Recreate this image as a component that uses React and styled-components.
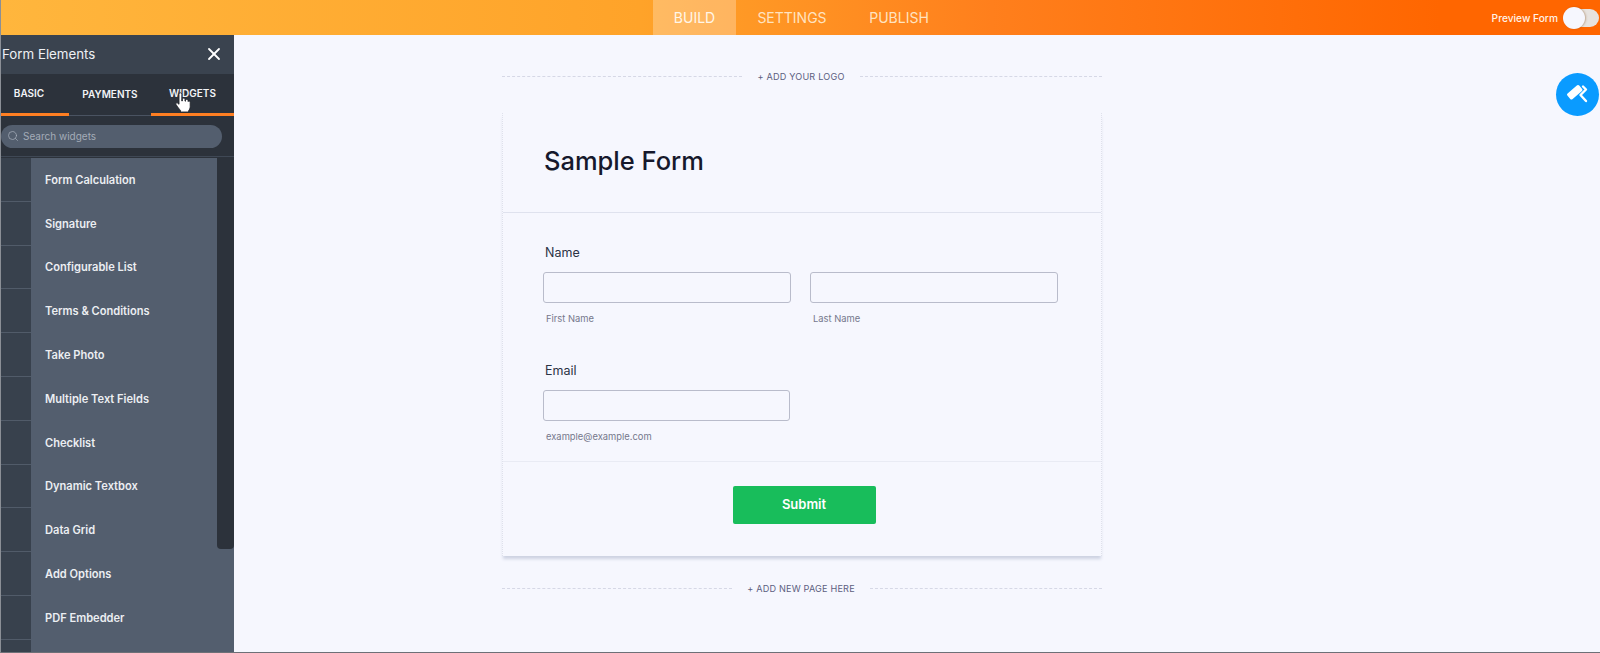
import React from 'react';
import styled, { createGlobalStyle } from 'styled-components';
import { Search, X } from 'lucide-react';

const GlobalStyle = createGlobalStyle`
  * { box-sizing: border-box; }
  html, body { margin: 0; padding: 0; height: 100%; overflow: hidden; }
  body { background: #f6f7fe; font-family: Inter, "Liberation Sans", sans-serif; }
`;

const Page = styled.div`
  position: relative;
  display: flex;
  flex-direction: column;
  width: 1600px;
  height: 653px;
  border-left: 1px solid #8b8f96;
  border-bottom: 1px solid #6d7077;
  overflow: hidden;
`;

const TopBar = styled.header`
  display: grid;
  grid-template-columns: 653px auto 1fr;
  align-items: stretch;
  flex: 0 0 35px;
  height: 35px;
  margin-left: -1px;
  background: linear-gradient(90deg, #ffb63d 0%, #ffa329 40%, #ff7f1c 62%, #ff6600 90%);
`;

const NavTabs = styled.nav`
  display: flex;
`;

const NavTab = styled.a`
  display: flex;
  align-items: center;
  justify-content: center;
  width: ${props => props.width}px;
  font-size: 14px;
  color: ${props => props.active ? '#fff6e8' : '#ffe3c0'};
  background: ${props => props.active ? 'rgba(255, 255, 255, 0.27)' : 'transparent'};
`;

const PreviewBox = styled.div`
  display: flex;
  justify-content: flex-end;
  align-items: center;
  gap: 6px;
  padding-right: 1px;
  font-size: 10.2px;
  font-weight: 500;
  color: #fff3e8;
`;

const Toggle = styled.div`
  position: relative;
  width: 35px;
  height: 18px;
  border-radius: 9px;
  background: #e7e3df;
`;

const Knob = styled.span`
  position: absolute;
  left: -1px;
  top: -2px;
  width: 22px;
  height: 22px;
  border-radius: 50%;
  background: #f6f7fe;
  box-shadow: 1px 0 2px rgba(120, 60, 0, 0.35);
`;

const Workspace = styled.div`
  display: flex;
  flex: 1;
  min-height: 0;
`;

const Sidebar = styled.aside`
  display: flex;
  flex-direction: column;
  flex: 0 0 233px;
  background: #2c323b;
`;

const SidebarHead = styled.div`
  display: flex;
  align-items: center;
  justify-content: space-between;
  flex: 0 0 39px;
  padding: 0 10px 2px 1px;
  font-size: 13.3px;
  color: #eef0f4;
  background: #3a434f;
`;

const SidebarTabs = styled.div`
  display: grid;
  grid-template-columns: 68px 82px 83px;
  flex: 0 0 42px;
`;

const SidebarTab = styled.div`
  display: flex;
  align-items: center;
  justify-content: center;
  padding-right: ${props => props.inset || 0}px;
  padding-bottom: 2px;
  font-size: 10px;
  font-weight: 600;
  color: #f2f4f7;
  border-bottom: ${props => props.active ? '3px solid #ff7f22' : '1px solid #4a5361'};
`;

const SearchWrap = styled.div`
  display: flex;
  align-items: center;
  flex: 0 0 41px;
  padding-right: 12px;
  border-bottom: 1px solid #3f4855;
`;

const SearchPill = styled.div`
  display: flex;
  align-items: center;
  gap: 4px;
  width: 100%;
  height: 23px;
  padding-left: 6px;
  border-radius: 12px;
  font-size: 10px;
  color: #a4acb8;
  background: #535e6e;
`;

const WidgetList = styled.div`
  position: relative;
  flex: 1;
  margin-top: 1px;
`;

const WidgetRow = styled.div`
  display: flex;
  height: 43.8px;
  background: #535e6e;
`;

const RowStrip = styled.div`
  flex: 0 0 30px;
  background: #38414d;
  border-bottom: 1px solid #515b69;
`;

const RowLabel = styled.div`
  display: flex;
  align-items: center;
  padding-left: 14px;
  font-size: 11.1px;
  font-weight: 600;
  color: #eceef2;
`;

const Scrollbar = styled.div`
  position: absolute;
  top: 0;
  right: 0;
  width: 17px;
  height: 391px;
  border-radius: 0 0 4px 4px;
  background: #2c323b;
`;

const Canvas = styled.main`
  flex: 1;
  padding: 29px 0 0 268px;
`;

const AddRow = styled.div`
  display: grid;
  grid-template-columns: ${props => props.columns};
  align-items: center;
  width: 600px;
  height: 24px;
  font-size: 9.1px;
  letter-spacing: 0.2px;
  color: #5c6080;
`;

const DashLine = styled.span`
  border-top: 1px dashed #d6d8e6;
`;

const AddText = styled.span`
  text-align: center;
  white-space: nowrap;
`;

const Card = styled.section`
  width: 600px;
  height: 443px;
  margin-top: 25px;
  margin-bottom: 20px;
  border-left: 1px dotted #dfe1ec;
  border-right: 1px dotted #dfe1ec;
  box-shadow: 0 4px 3px -1px #cdd2e2;
  display: flex;
  flex-direction: column;
`;

const CardHead = styled.div`
  flex: 0 0 100px;
  padding: 31px 0 0 41px;
  border-bottom: 1px solid #dfe2ee;
`;

const Title = styled.h1`
  margin: 0;
  font-size: 25.5px;
  line-height: 34px;
  font-weight: 500;
  color: #16192c;
`;

const CardBody = styled.div`
  flex: 0 0 249px;
  padding: 30px 40px 0;
  border-bottom: 1px solid #e9ebf4;
`;

const Field = styled.div`
  & + & {
    margin-top: 35px;
  }
`;

const FieldLabel = styled.div`
  margin-left: 2px;
  font-size: 12.5px;
  line-height: 20px;
  color: #2c3345;
`;

const InputRow = styled.div`
  display: grid;
  grid-template-columns: ${props => props.columns};
  column-gap: 19px;
  margin-top: 9px;
`;

const InputBox = styled.div`
  height: 31px;
  border: 1px solid #b9bccb;
  border-radius: 3px;
`;

const SubLabel = styled.div`
  margin: 9px 0 0 3px;
  font-size: 9.4px;
  line-height: 14px;
  color: #75788c;
`;

const CardFoot = styled.div`
  display: flex;
  justify-content: center;
  padding: 24px 0 0 4px;
`;

const SubmitButton = styled.button`
  width: 143px;
  height: 38px;
  padding: 0 0 2px;
  border: 0;
  border-radius: 2px;
  font-family: inherit;
  font-size: 13px;
  font-weight: 600;
  color: #ffffff;
  background: #18bd5b;
`;

const DesignerFab = styled.div`
  position: absolute;
  top: 73px;
  right: 1px;
  width: 43px;
  height: 43px;
  border-radius: 50%;
  background: #0a9bff;
`;

const CursorHand = styled.svg`
  position: absolute;
  left: 174px;
  top: 92px;
  width: 16px;
  height: 21px;
`;

const widgets = [
  'Form Calculation', 'Signature', 'Configurable List', 'Terms & Conditions',
  'Take Photo', 'Multiple Text Fields', 'Checklist', 'Dynamic Textbox',
  'Data Grid', 'Add Options', 'PDF Embedder', '',
];

const App = () => (
  <Page>
    <GlobalStyle />
    <TopBar>
      <span />
      <NavTabs>
        <NavTab width={83} active>BUILD</NavTab>
        <NavTab width={112}>SETTINGS</NavTab>
        <NavTab width={102}>PUBLISH</NavTab>
      </NavTabs>
      <PreviewBox>
        Preview Form
        <Toggle><Knob /></Toggle>
      </PreviewBox>
    </TopBar>
    <Workspace>
      <Sidebar>
        <SidebarHead>
          Form Elements
          <X size={20} color="#ffffff" strokeWidth={2.2} />
        </SidebarHead>
        <SidebarTabs>
          <SidebarTab active inset={12}>BASIC</SidebarTab>
          <SidebarTab>PAYMENTS</SidebarTab>
          <SidebarTab active>WIDGETS</SidebarTab>
        </SidebarTabs>
        <SearchWrap>
          <SearchPill>
            <Search size={12} color="#a4acb8" strokeWidth={1.5} />
            Search widgets
          </SearchPill>
        </SearchWrap>
        <WidgetList>
          {widgets.map((name, i) => (
            <WidgetRow key={i}>
              <RowStrip />
              <RowLabel>{name}</RowLabel>
            </WidgetRow>
          ))}
          <Scrollbar />
        </WidgetList>
      </Sidebar>
      <Canvas>
        <AddRow columns="240px 1fr 242px">
          <DashLine />
          <AddText>+ ADD YOUR LOGO</AddText>
          <DashLine />
        </AddRow>
        <Card>
          <CardHead>
            <Title>Sample Form</Title>
          </CardHead>
          <CardBody>
            <Field>
              <FieldLabel>Name</FieldLabel>
              <InputRow columns="248px 248px">
                <div>
                  <InputBox />
                  <SubLabel>First Name</SubLabel>
                </div>
                <div>
                  <InputBox />
                  <SubLabel>Last Name</SubLabel>
                </div>
              </InputRow>
            </Field>
            <Field>
              <FieldLabel>Email</FieldLabel>
              <InputRow columns="247px">
                <div>
                  <InputBox />
                  <SubLabel>example@example.com</SubLabel>
                </div>
              </InputRow>
            </Field>
          </CardBody>
          <CardFoot>
            <SubmitButton>Submit</SubmitButton>
          </CardFoot>
        </Card>
        <AddRow columns="230px 1fr 232px">
          <DashLine />
          <AddText>+ ADD NEW PAGE HERE</AddText>
          <DashLine />
        </AddRow>
      </Canvas>
    </Workspace>
    <DesignerFab>
      <svg width="43" height="43" viewBox="0 0 43 43" fill="none">
        <rect x="11" y="15.5" width="15.5" height="7.5" rx="1.5" fill="#fff" transform="rotate(-40 18.75 19.25)" />
        <path d="M27 13.5 L30 16.5 L24.5 22 L30 28" stroke="#fff" strokeWidth="2.4" strokeLinejoin="round" strokeLinecap="round" />
      </svg>
    </DesignerFab>
    <CursorHand viewBox="0 0 16 21">
      <path
        d="M4 2.2a1.4 1.4 0 0 1 2.8 0V9l.6-.1V7.4a1.3 1.3 0 0 1 2.6 0v1.7l.5.1V8.2a1.3 1.3 0 0 1 2.5 0v1.4a1.2 1.2 0 0 1 2.2.6v4.3c0 2-.8 3.3-1.6 4.3V20H5.5v-1.6C4 17 2.6 14.8 1 12.5c-.7-1.1.8-2.3 1.8-1.3L4 12.3z"
        fill="#fff"
        stroke="#23262c"
        strokeWidth="0.9"
      />
    </CursorHand>
  </Page>
);

export default App;
